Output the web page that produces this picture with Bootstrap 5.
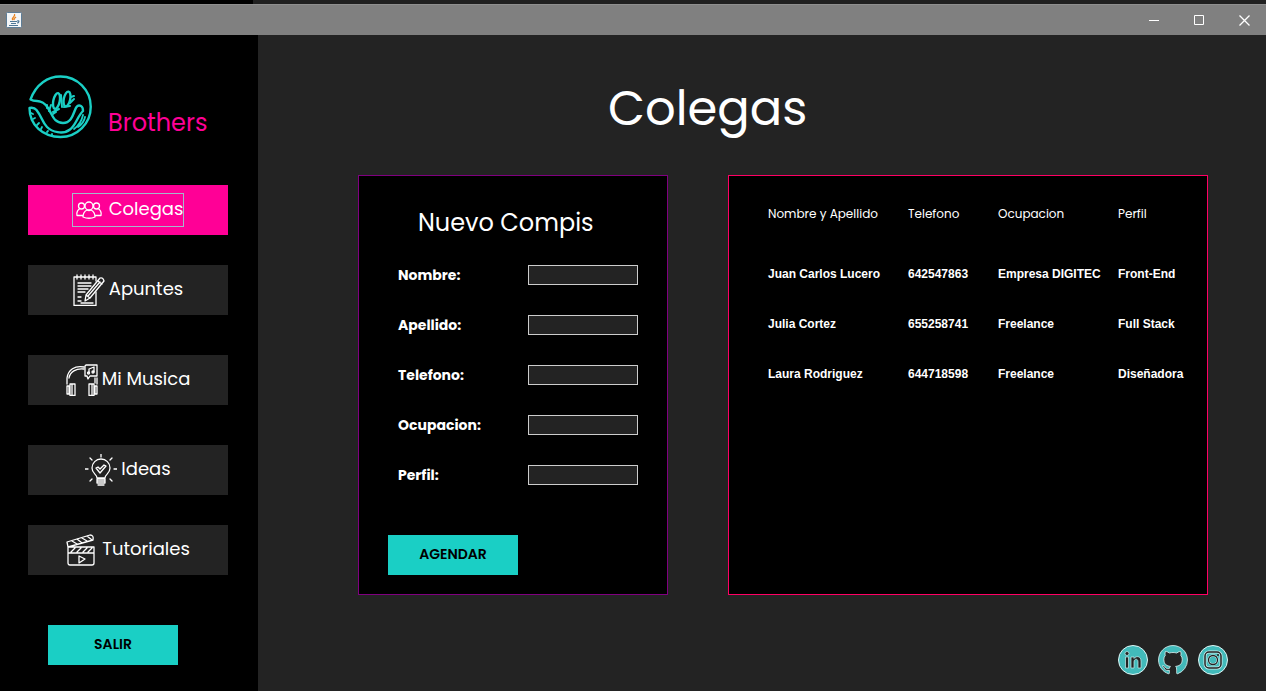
<!DOCTYPE html>
<html lang="es">
<head>
<meta charset="utf-8">
<meta name="viewport" content="width=device-width, initial-scale=1">
<title>Brothers - Colegas</title>
<link rel="stylesheet" href="https://cdn.jsdelivr.net/npm/bootstrap@5.3.0/dist/css/bootstrap.min.css">
<style>
:root { --teal: #1acfc5; --pink: #ff0096; --panel: #232323; }
body { font-family: Poppins, Inter, "Open Sans", sans-serif; background: var(--panel); color: #fff; font-size: 14px; }
.behind { height: 4px; background: linear-gradient(90deg, #000 20%, #202020 20%); }
.titlebar { height: 31px; background: #808080; border-top: 1px solid #8f8f8f; padding-left: 6px; }
.winbtn { width: 45px; color: #fff; background: none; border: 0; padding: 0; display: grid; place-items: center; }
.side { flex: 0 0 258px; background: #000; padding: 40px 30px 24px 28px; }
.brand-row { margin-bottom: 46px; }
.brand-name { font-size: 24px; line-height: 32px; color: var(--pink); }
.menu-btn { height: 50px; background: var(--panel); color: #fff; border: 0; border-radius: 0; font-size: 18px; line-height: 32px; width: 100%; padding: 0; }
.menu-btn:hover { background: #333; color: #fff; }
.menu-btn.current { background: var(--pink); }
.gap-short { margin-top: 30px; }
.gap-long { margin-top: 40px; }
.focus-box { border: 1px solid transparent; height: 34px; }
.focus-box svg { flex: none; }
.menu-text { padding-bottom: 2px; }
.current .focus-box { border-color: #a3b8cc; }
.action-btn { width: 130px; height: 40px; background: var(--teal); color: #000; border: 0; border-radius: 0; font-size: 14px; font-weight: 600; padding: 0 0 2px; }
.action-btn:hover { background: #16b5ac; }
.exit-btn { margin: 50px 0 0 20px; }
.add-btn { margin-top: 20px; }
.main-area { min-width: 0; padding: 40px 38px 16px 100px; }
.page-title { font-size: 48px; line-height: 68px; font-weight: 400; margin: 0 0 32px; padding-left: 250px; }
.panels { gap: 60px; padding-right: 20px; }
.box { background: #000; border: 1px solid purple; min-height: 420px; }
.form-box { flex: 0 0 310px; padding: 29px 29px 19px; }
.list-box { min-width: 0; border-color: #ff0064; padding: 8px 0 0 39px; }
.form-title { font-size: 24px; line-height: 36px; font-weight: 400; padding-left: 30px; margin: 0 0 24px; }
.field-row { height: 20px; margin-bottom: 30px; padding-left: 10px; }
.field-row label { width: 130px; font-size: 14px; line-height: 20px; font-weight: 700; }
.field-row input { flex: 1; width: 0; height: 20px; padding: 0 4px; border: 1px solid #ccc; border-radius: 0; background: var(--panel); color: #fff; font-size: 12px; }
.people { width: 100%; table-layout: fixed; }
.people th { font-weight: 400; font-size: 12px; height: 65px; padding: 0 0 5px; white-space: nowrap; }
.people td { font-family: "Liberation Sans", Arial, sans-serif; font-weight: 700; font-size: 12px; height: 50px; padding: 0; white-space: nowrap; }
.col-name { width: 140px; }
.col-phone { width: 90px; }
.col-job { width: 120px; }
.socials { gap: 10px; margin-top: 50px; }
.socials svg { display: block; }
.line-art { fill: none; stroke: #fff; stroke-width: 1.3; stroke-linecap: round; stroke-linejoin: round; }
</style>
</head>
<body class="min-vh-100 d-flex flex-column">
<div class="behind"></div>
<header class="titlebar d-flex align-items-stretch">
  <svg class="align-self-center" width="16" height="16" viewBox="0 0 16 16" aria-label="Java"><rect x=".5" y=".5" width="15" height="15" rx="1" fill="#f4f6f8" stroke="#5d7d97"/><path d="M7 8C4.500 6 10 4.500 8.500 2M8.500 8C7 6.500 9 6 10 5" fill="none" stroke="#e8821e" stroke-width="1.300"/><path d="M4 9.500h7M5 11.500h5M3 13.500h9M11 9c3-1 2 2 0 2" fill="none" stroke="#4f7796" stroke-width="1.200"/></svg>
  <div class="d-flex ms-auto">
    <button class="winbtn" aria-label="Minimizar"><svg width="13" height="11"><path d="M2 5.500h10" stroke="#fff"/></svg></button>
    <button class="winbtn" aria-label="Maximizar"><svg width="13" height="11"><path d="M2.500.500h9v9h-9z" fill="none" stroke="#fff"/></svg></button>
    <button class="winbtn" aria-label="Cerrar"><svg width="13" height="11"><path d="M2.500.500l10 10M12.500.500l-10 10" stroke="#fff" stroke-width="1.300"/></svg></button>
  </div>
</header>
<div class="d-flex flex-fill">
  <aside class="side">
    <div class="brand-row d-flex align-items-end gap-3">
      <svg width="64" height="64" viewBox="0 0 64 64" fill="none" stroke="#1acfc5" stroke-width="2.400" stroke-linecap="round" stroke-linejoin="round" aria-hidden="true">
        <path d="M2.500 24.500C8 9 20 1.500 32.500 1.500A30.200 30.200 0 0 1 32.500 62C15 62 1.500 50 1.500 33Q6 32 8.500 35C14 42 14 47 19 52C24 57 35 60 42 54.500C48 50 49 42 55 36Q55 32 53 31Q49 29 47 35C45 40 43 48 35 48C26 48 25 41 20 33C17 28 12 26 9 26Q5 26 2.500 24.500z"/>
        <ellipse cx="28.500" cy="26" rx="3.200" ry="8" transform="rotate(12 28.500 26)"/>
        <ellipse cx="39" cy="24" rx="3.200" ry="7.500" transform="rotate(12 39 24)"/>
        <path d="M33 20l1 12M25 37l6-3M36 32l6-1M42 28l4-4M43 22l3-1M23 30l-2 6M19 30v3M25 39l3-2" stroke-width="2"/>
        <path d="M46 54Q53 49 55 40M50 52Q56 48 57 42M3 38l2 1M5 44l2-1M9 50l2-2M13 54l1-2M19 57l1-1M24 60v-1" stroke-width="1.800"/>
      </svg>
      <span class="brand-name">Brothers</span>
    </div>
    <nav class="d-flex flex-column">
      <button class="btn menu-btn current d-flex justify-content-center align-items-center"><span class="focus-box d-flex align-items-center gap-1"><svg class="line-art" width="32" height="32" viewBox="0 0 32 32"><circle cx="16" cy="12" r="4"/><circle cx="8.500" cy="12" r="3"/><circle cx="23.500" cy="12" r="3"/><path d="M10 23c0-4 2-6 4-7q2 1 4 0c2 1 4 3 4 7q-6 2.500-12 0zM9 21.500H4c-1-3 1-6 3-7M23 21.500h5c1-3-1-6-3-7"/></svg><span class="menu-text">Colegas</span></span></button>
      <button class="btn menu-btn gap-short d-flex justify-content-center align-items-center"><span class="focus-box d-flex align-items-center gap-1"><svg class="line-art" width="32" height="32" viewBox="0 0 32 32"><path d="M23 7V3H1v28.500h22V18"/><path d="M4 1v4M8 1v4M12 1v4M16 1v4M20 1v4M5 9h13M5 12h13M5 15h10M5 18h7M5 23h3M5 27h3M8 29h12"/><path d="M12 27l1-6L27 4q3-1 4 3L17 24zM13 21l4 3M25 7l4 3M15 22L27 8"/></svg><span class="menu-text">Apuntes</span></span></button>
      <button class="btn menu-btn gap-long d-flex justify-content-center align-items-center"><span class="focus-box d-flex align-items-center gap-1"><svg class="line-art" width="32" height="32" viewBox="0 0 32 32"><path d="M1 20v-6C2 6 9 1 18 3M3 14C4 8 10 4 18 5M31 14v6M29 14v5"/><path d="M1 22h2v8H1zM4 20h2v11.500H4zM6 20h3v11.500H6zM29 22h2v8h-2zM26 20h2v11.500h-2zM23 20h3v11.500h-3z"/><path d="M20 1h11v11h-7l-2 3-1-3h-2V2zM23 9V5l5-2v5"/><circle cx="22.500" cy="9" r="1"/><circle cx="27" cy="8" r="1"/></svg><span class="menu-text">Mi Musica</span></span></button>
      <button class="btn menu-btn gap-long d-flex justify-content-center align-items-center"><span class="focus-box d-flex align-items-center gap-1"><svg class="line-art" width="32" height="32" viewBox="0 0 32 32"><path d="M12 24c0-4-5-4-5-10a9 9 0 0 1 18 0c0 6-5 6-5 10zM12 25h8v4h-8zM12 27h8M13 31h6M16 0v3M5 4l2 2M27 4l-2 2M0 15h3M29 15h3M5 27l2-2M27 27l-2-2"/><path d="M11 14l2-1 2 2 4-4 2 1-6 7z"/></svg><span class="menu-text">Ideas</span></span></button>
      <button class="btn menu-btn gap-short d-flex justify-content-center align-items-center"><span class="focus-box d-flex align-items-center gap-1"><svg class="line-art" width="32" height="32" viewBox="0 0 32 32"><path d="M2 13L1 8 24 1q4 0 3 5zM6 7l5 3M11 5l5 4M16 4l5 3M21 2l5 4M2 13h26v16q0 2-2 2H4q-2 0-2-2zM2 19h26M9 14l-4 4M15 14l-4 4M21 14l-4 4M26 14l-4 4M13 22l6 3-6 4z"/></svg><span class="menu-text">Tutoriales</span></span></button>
    </nav>
    <button class="btn action-btn exit-btn">SALIR</button>
  </aside>
  <main class="main-area flex-fill d-flex flex-column">
    <h1 class="page-title">Colegas</h1>
    <div class="panels d-flex">
      <form class="box form-box">
        <h2 class="form-title">Nuevo Compis</h2>
        <div class="field-row d-flex align-items-center"><label for="nombre">Nombre:</label><input id="nombre" type="text"></div>
        <div class="field-row d-flex align-items-center"><label for="apellido">Apellido:</label><input id="apellido" type="text"></div>
        <div class="field-row d-flex align-items-center"><label for="telefono">Telefono:</label><input id="telefono" type="text"></div>
        <div class="field-row d-flex align-items-center"><label for="ocupacion">Ocupacion:</label><input id="ocupacion" type="text"></div>
        <div class="field-row d-flex align-items-center"><label for="perfil">Perfil:</label><input id="perfil" type="text"></div>
        <button type="button" class="btn action-btn add-btn">AGENDAR</button>
      </form>
      <section class="box list-box flex-fill">
        <table class="people">
          <colgroup><col class="col-name"><col class="col-phone"><col class="col-job"><col></colgroup>
          <thead><tr><th>Nombre y Apellido</th><th>Telefono</th><th>Ocupacion</th><th>Perfil</th></tr></thead>
          <tbody>
            <tr><td>Juan Carlos Lucero</td><td>642547863</td><td>Empresa DIGITEC</td><td>Front-End</td></tr>
            <tr><td>Julia Cortez</td><td>655258741</td><td>Freelance</td><td>Full Stack</td></tr>
            <tr><td>Laura Rodriguez</td><td>644718598</td><td>Freelance</td><td>Diseñadora</td></tr>
          </tbody>
        </table>
      </section>
    </div>
    <div class="socials d-flex justify-content-end">
      <a href="#" aria-label="LinkedIn"><svg width="30" height="30" viewBox="0 0 30 30"><circle cx="15" cy="15" r="14.500" fill="#42baba" stroke="#dff5f5"/><path d="M7.500 12h3v11h-3zM13 12h3v1.500c2-3 7-2.500 7 2.500v7h-3v-6c0-4-4-3.500-4 0v6h-3z" fill="#232323" stroke="#c8eeee" stroke-width=".700"/><circle cx="9" cy="8.500" r="2" fill="#232323" stroke="#c8eeee" stroke-width=".700"/></svg></a>
      <a href="#" aria-label="GitHub"><svg width="30" height="30" viewBox="-.3 -.3 16.600 16.600"><path fill="#42baba" stroke="#dff5f5" stroke-width=".450" d="M8 0C3.580 0 0 3.580 0 8c0 3.540 2.290 6.530 5.470 7.590.4.070.55-.17.55-.38 0-.19-.01-.82-.01-1.490-2.010.37-2.530-.49-2.690-.94-.09-.23-.48-.94-.82-1.130-.28-.15-.68-.52-.01-.53.63-.01 1.080.58 1.230.82.72 1.210 1.870.87 2.330.66.07-.52.28-.87.51-1.070-1.780-.2-3.640-.89-3.640-3.950 0-.87.31-1.590.82-2.150-.08-.2-.36-1.020.08-2.120 0 0 .67-.21 2.200.82.64-.18 1.320-.27 2-.27s1.360.09 2 .27c1.530-1.040 2.200-.82 2.200-.82.44 1.100.16 1.920.08 2.120.51.56.82 1.270.82 2.150 0 3.070-1.870 3.750-3.650 3.950.29.25.54.73.54 1.480 0 1.070-.01 1.930-.01 2.200 0 .21.15.46.55.38A8 8 0 0 0 16 8c0-4.420-3.580-8-8-8z"/></svg></a>
      <a href="#" aria-label="Instagram"><svg width="30" height="30" viewBox="0 0 30 30" fill="none"><circle cx="15" cy="15" r="14.500" fill="#42baba" stroke="#dff5f5"/><rect x="7" y="7" width="16" height="16" rx="4" stroke="#c8eeee" stroke-width="3"/><rect x="7" y="7" width="16" height="16" rx="4" stroke="#232323" stroke-width="1.500"/><circle cx="15" cy="15" r="4.500" stroke="#c8eeee" stroke-width="2.500"/><circle cx="15" cy="15" r="4.500" stroke="#232323" stroke-width="1.300"/><circle cx="20" cy="10" r="1" fill="#232323"/></svg></a>
    </div>
  </main>
</div>
<script src="https://cdn.jsdelivr.net/npm/bootstrap@5.3.0/dist/js/bootstrap.bundle.min.js"></script>
</body>
</html>
